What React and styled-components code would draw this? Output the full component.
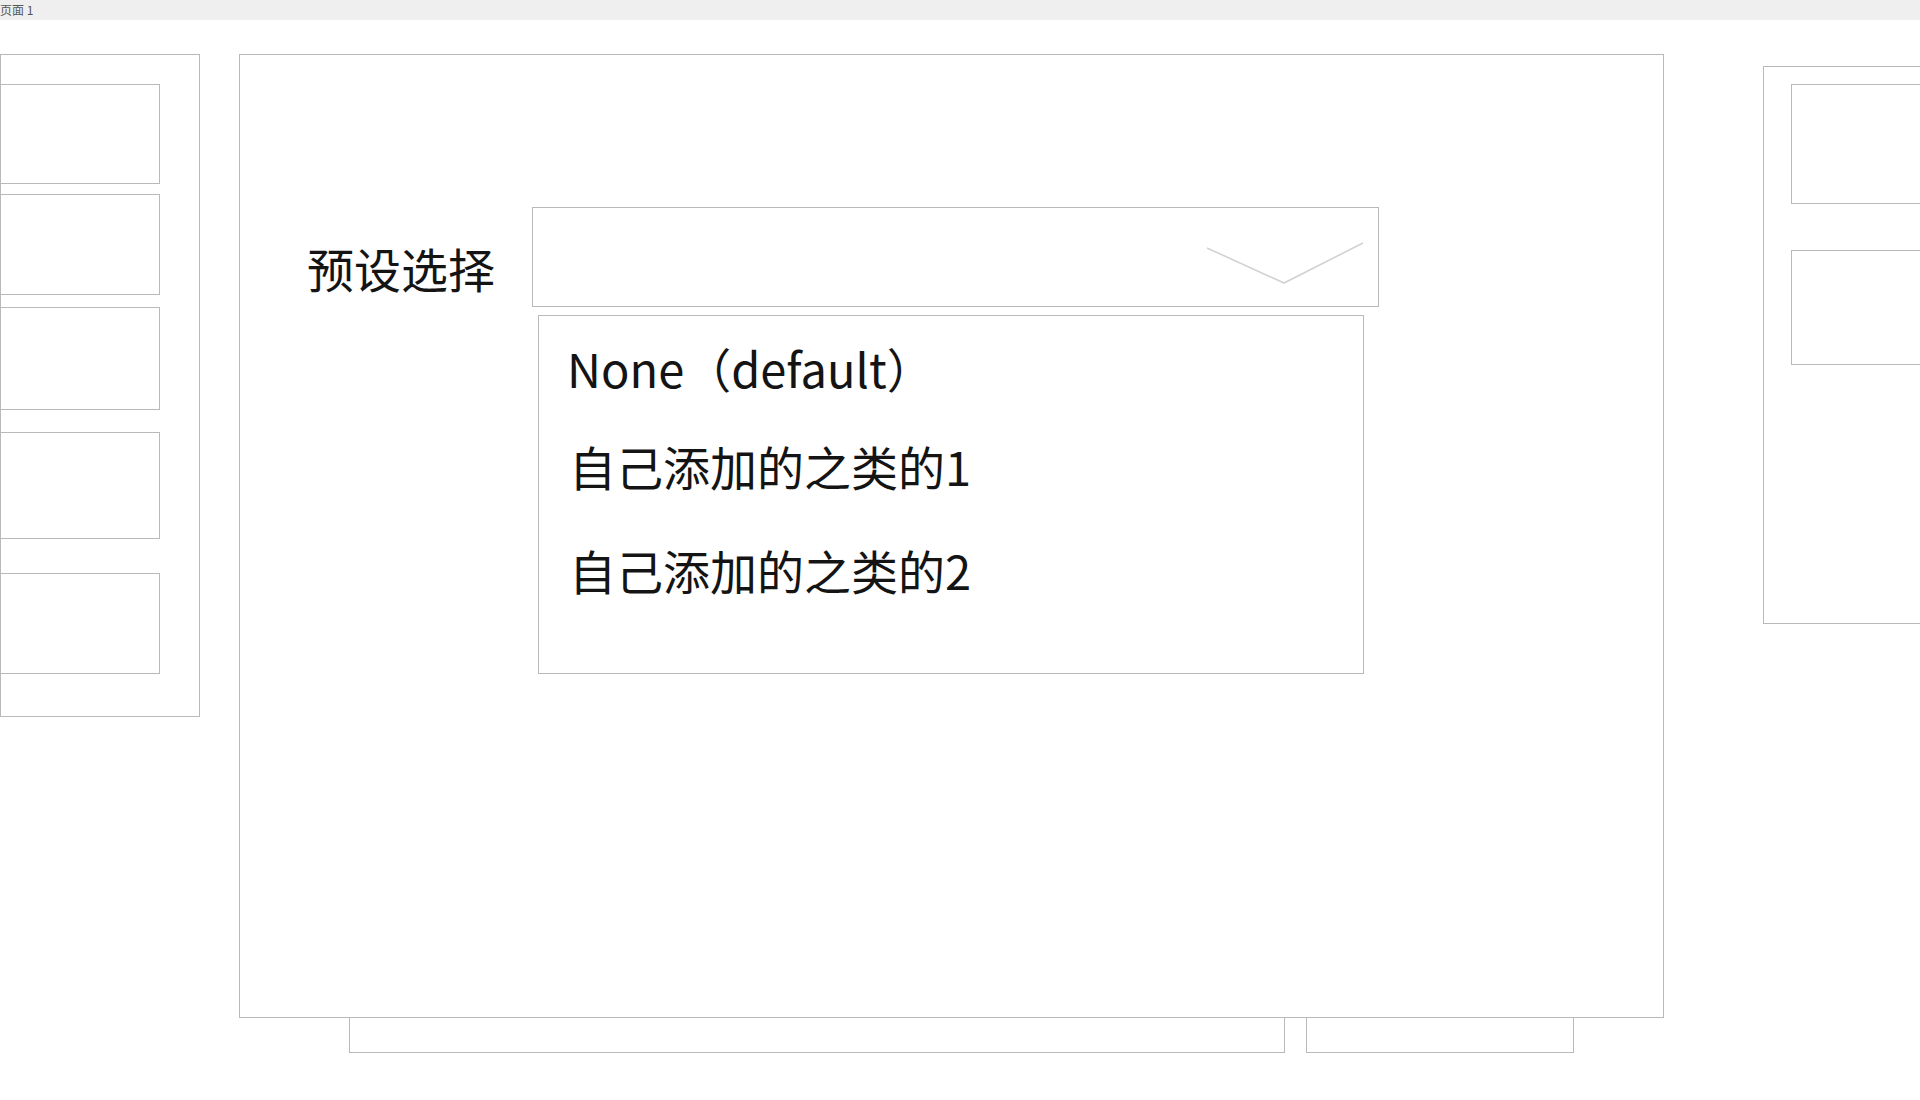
import styled, { createGlobalStyle } from "styled-components"

const line = "#b9b9b9"

const GlobalStyle = createGlobalStyle`
  html, body {
    margin: 0;
    padding: 0;
    width: 1920px;
    height: 1100px;
    overflow: hidden;
    background: #fff;
  }
  body {
    font-family: "Noto Sans CJK SC", "Noto Sans", sans-serif;
    color: #141414;
  }
  * { box-sizing: border-box; }
`

const Page = styled.div`
  width: 1920px;
  height: 1100px;
  overflow: hidden;
  display: flex;
  flex-direction: column;
`

const TopBar = styled.div`
  height: 20px;
  background: #efefef;
  font-size: 12px;
  line-height: 20px;
  color: #555;
`

const Workspace = styled.div`
  display: flex;
  align-items: flex-start;
`

const SidePanel = styled.div`
  flex-shrink: 0;
  width: 200px;
  height: ${p => p.h}px;
  margin-top: ${p => p.top}px;
  margin-left: ${p => p.left || 0}px;
  border: 1px solid ${line};
  border-right: ${p => (p.open ? "none" : `1px solid ${line}`)};
  padding: ${p => p.pad};
  display: flex;
  flex-direction: column;
`

const Thumb = styled.div`
  flex-shrink: 0;
  width: ${p => p.w}px;
  height: ${p => p.h}px;
  margin-top: ${p => p.gap}px;
  border: 1px solid ${line};
  border-right: ${p => (p.open ? "none" : `1px solid ${line}`)};
  margin-left: ${p => p.shift || 0}px;
`

const MainColumn = styled.div`
  flex-shrink: 0;
  margin-left: 39px;
  margin-top: 34px;
  display: flex;
  flex-direction: column;
`

const MainPanel = styled.div`
  width: 1425px;
  height: 964px;
  border: 1px solid ${line};
  padding: 152px 0 0 67px;
`

const FieldRow = styled.div`
  display: flex;
  align-items: flex-start;
`

const Label = styled.div`
  width: 225px;
  margin-top: 37px;
  font-size: 47px;
  line-height: 1;
`

const SelectWrap = styled.div`
  position: relative;
`

const SelectBox = styled.div`
  width: 847px;
  height: 100px;
  border: 1px solid ${line};
  display: flex;
  justify-content: flex-end;
  align-items: flex-start;
  padding: 32px 12px 0 0;
`

const Menu = styled.ul`
  position: absolute;
  left: 6px;
  top: 108px;
  width: 826px;
  height: 359px;
  margin: 0;
  padding: 0 28px;
  list-style: none;
  background: #fff;
  border: 1px solid ${line};
`

const MenuItem = styled.li`
  height: ${p => p.h || 104}px;
  line-height: 104px;
  font-size: 47px;
  white-space: nowrap;
  padding-left: ${p => p.indent || 0}px;
`

const TabRow = styled.div`
  display: flex;
  gap: 21px;
  padding-left: 110px;
`

const Tab = styled.div`
  width: ${p => p.w}px;
  height: 35px;
  border: 1px solid ${line};
  border-top: none;
`

const leftThumbs = [
  { gap: 29, h: 100 },
  { gap: 10, h: 101 },
  { gap: 12, h: 103 },
  { gap: 22, h: 107 },
  { gap: 34, h: 101 },
]

const rightThumbs = [
  { gap: 17, h: 120 },
  { gap: 46, h: 115 },
]

const Chevron = () => (
  <svg width="162" height="48" viewBox="0 0 162 48">
    <polyline
      points="3,8 80,43 159,3"
      fill="none"
      stroke="#d2d2d2"
      strokeWidth="1.6"
    />
  </svg>
)

export default function App() {
  return (
    <Page>
      <GlobalStyle />
      <TopBar>页面 1</TopBar>
      <Workspace>
        <SidePanel h={663} top={34} pad="0">
          {leftThumbs.map((t, i) => (
            <Thumb key={i} w={160} h={t.h} gap={t.gap} shift={-1} />
          ))}
        </SidePanel>

        <MainColumn>
          <MainPanel>
            <FieldRow>
              <Label>预设选择</Label>
              <SelectWrap>
                <SelectBox>
                  <Chevron />
                </SelectBox>
                <Menu>
                  <MenuItem h={98}>None（default）</MenuItem>
                  <MenuItem indent={2}>自己添加的之类的1</MenuItem>
                  <MenuItem indent={2}>自己添加的之类的2</MenuItem>
                </Menu>
              </SelectWrap>
            </FieldRow>
          </MainPanel>
          <TabRow>
            <Tab w={936} />
            <Tab w={268} />
          </TabRow>
        </MainColumn>

        <SidePanel h={558} top={46} left={99} pad="0 0 0 27px" open>
          {rightThumbs.map((t, i) => (
            <Thumb key={i} w={173} h={t.h} gap={t.gap} open />
          ))}
        </SidePanel>
      </Workspace>
    </Page>
  )
}
